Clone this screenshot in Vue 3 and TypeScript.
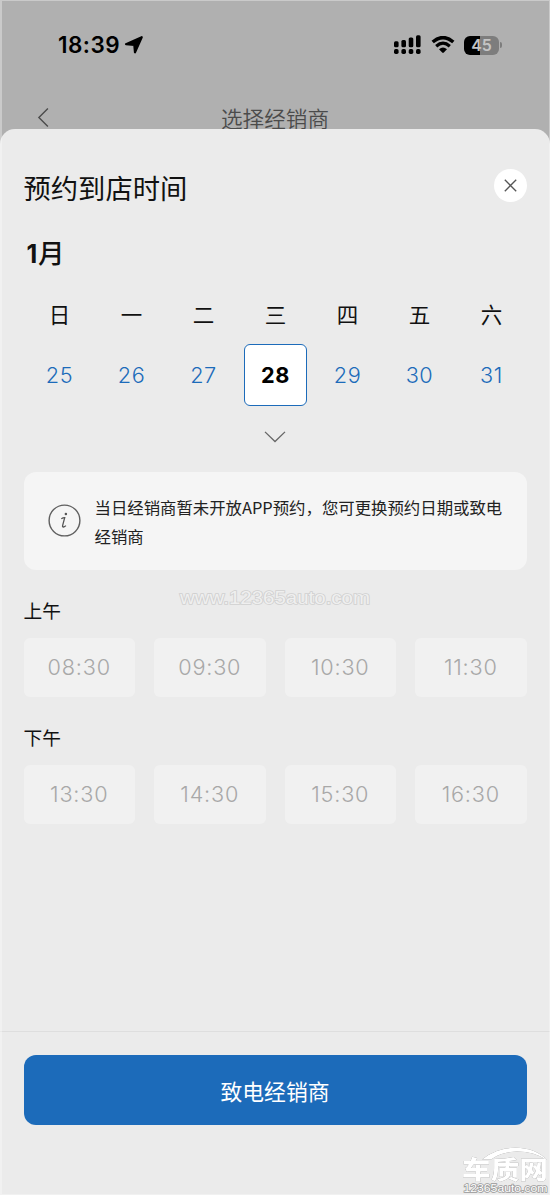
<script setup lang="ts">
interface Day {
  week: string
  date: number
  active?: boolean
}

const days: Day[] = [
  { week: '日', date: 25 },
  { week: '一', date: 26 },
  { week: '二', date: 27 },
  { week: '三', date: 28, active: true },
  { week: '四', date: 29 },
  { week: '五', date: 30 },
  { week: '六', date: 31 },
]

const periods: { label: string; slots: string[] }[] = [
  { label: '上午', slots: ['08:30', '09:30', '10:30', '11:30'] },
  { label: '下午', slots: ['13:30', '14:30', '15:30', '16:30'] },
]
</script>

<template>
  <div class="screen">
    <header class="status">
      <span class="clock">18:39</span>
      <svg class="arrow" width="20" height="20" viewBox="0 0 20 20">
        <path d="M2 9.2 17.7 2.2 11 17.3 10.3 9.9Z" stroke="#000" stroke-width="2.2" stroke-linejoin="round" />
      </svg>
      <svg class="signal" width="28" height="20" viewBox="0 0 28 20">
        <rect x="0" y="6.2" width="4.6" height="6" rx="1.5" />
        <rect x="7.4" y="5" width="4.6" height="7.2" rx="1.5" />
        <rect x="14.7" y="2.6" width="4.6" height="9.6" rx="1.5" />
        <rect x="22" y="0.3" width="4.6" height="11.9" rx="1.5" />
        <rect x="0" y="14.1" width="4.6" height="4.8" rx="1.7" />
        <rect x="7.4" y="14.1" width="4.6" height="4.8" rx="1.7" />
        <rect x="14.7" y="14.1" width="4.6" height="4.8" rx="1.7" />
        <rect x="22" y="14.1" width="4.6" height="4.8" rx="1.7" />
      </svg>
      <svg class="wifi" width="24" height="18" viewBox="0 0 24 18">
        <path d="M1.7 6Q12-2.8 22.3 6" fill="none" stroke="#000" stroke-width="3.5" />
        <path d="M5.2 10.2Q12 4.2 18.8 10.2" fill="none" stroke="#000" stroke-width="3.2" />
        <path d="M8 13.2Q12 9.8 16 13.2L12.8 16.6Q12 17.4 11.2 16.6Z" />
      </svg>
      <span class="battery"><span class="level">45</span></span>
      <i class="cap"></i>
    </header>

    <nav class="nav">
      <svg class="back" width="12" height="20" viewBox="0 0 12 20">
        <path d="M10.9 .5 1.9 9.5 10.9 18.5" fill="none" stroke="#4b4b4b" stroke-width="1.4" />
      </svg>
      <span class="nav-title">选择经销商</span>
    </nav>

    <main class="sheet">
      <div class="head">
        <h1>预约到店时间</h1>
        <button class="close">
          <svg width="13" height="13" viewBox="0 0 13 13">
            <path d="M.8.8 12.2 12.2M12.2.8.8 12.2" stroke="#555" stroke-width="1.3" />
          </svg>
        </button>
      </div>
      <h2><span class="num">1</span>月</h2>

      <div class="calendar">
        <div v-for="d in days" :key="d.date" class="day">
          <span class="week">{{ d.week }}</span>
          <span class="date" :class="{ active: d.active }">{{ d.date }}</span>
        </div>
      </div>
      <svg class="expand" width="22" height="12" viewBox="0 0 22 12">
        <path d="M1 .9 11 10.5 21 .9" fill="none" stroke="#666" stroke-width="1.3" />
      </svg>

      <section class="notice">
        <svg class="info" width="33" height="33" viewBox="0 0 33 33">
          <circle cx="16.5" cy="16.5" r="15.4" fill="none" stroke="#606060" stroke-width="1.4" />
          <circle cx="17.9" cy="10" r="1.25" fill="#555" />
          <path d="M13.3 14.8Q15 13.7 16.7 13.7L14.6 21.6Q14.3 23.1 15.5 23 16.8 22.7 17.9 21.6" fill="none" stroke="#555" stroke-width="1.3" />
        </svg>
        <p>当日经销商暂未开放APP预约，您可更换预约日期或致电经销商</p>
      </section>

      <section v-for="p in periods" :key="p.label" class="period">
        <h3>{{ p.label }}</h3>
        <div class="slots">
          <button v-for="s in p.slots" :key="s" class="slot">{{ s }}</button>
        </div>
      </section>

      <footer>
        <button class="call">致电经销商</button>
      </footer>
    </main>

    <svg class="watermark" width="196" height="26" viewBox="0 0 196 26">
      <text x="3" y="18" textLength="190" lengthAdjust="spacingAndGlyphs">www.12365auto.com</text>
    </svg>
    <svg class="brand" width="90" height="50" viewBox="0 0 90 50">
      <g class="shade">
        <path d="M21 13.5Q36 1.5 55 1.7 75 2 86 14 72 5.5 56 5.6 40 6 30 13.5Z" />
        <text class="brand-name" x="1" y="32.5" textLength="86" lengthAdjust="spacingAndGlyphs">车质网</text>
      </g>
      <text class="brand-url" x="2.5" y="46" textLength="84" lengthAdjust="spacingAndGlyphs">12365auto.com</text>
    </svg>
  </div>
</template>

<style>
body {
  margin: 0;
}
</style>

<style scoped>
.screen {
  position: relative;
  box-sizing: border-box;
  width: 550px;
  height: 1195px;
  overflow: hidden;
  background: #b0b0b0;
  color: #111;
  font-family: "Noto Sans CJK SC", sans-serif;
  display: flex;
  flex-direction: column;
}
.screen::after {
  content: "";
  position: absolute;
  inset: 0;
  border: solid rgba(255, 255, 255, 0.55);
  border-width: 1px 1px 1px 2px;
  opacity: 0.6;
  pointer-events: none;
}
h1, h2, h3, p {
  margin: 0;
  font-weight: 400;
}
button {
  border: 0;
  padding: 0;
  font-family: inherit;
}
svg {
  display: block;
  flex: none;
}
.status {
  height: 90px;
  display: flex;
  align-items: center;
  flex: none;
}
.clock {
  width: 66px;
  margin-left: 58px;
  font: 600 22.5px/30px Inter, sans-serif;
  letter-spacing: 0.45px;
  color: #000;
}
.signal {
  margin-left: 250px;
}
.wifi {
  margin-left: 9px;
}
.battery {
  width: 35px;
  height: 19px;
  margin-left: 9px;
  border-radius: 6px;
  background: linear-gradient(90deg, #000 0 16px, #7d7d7d 16px);
  text-align: center;
}
.level {
  display: block;
  font: 600 16px/19px Inter, sans-serif;
  color: #c4c4c4;
}
.cap {
  width: 2px;
  height: 6px;
  margin-left: 1px;
  border-radius: 0 3px 3px 0;
  background: #7d7d7d;
}
.nav {
  height: 39px;
  flex: none;
  display: grid;
  grid-template-columns: 60px 1fr 60px;
}
.back {
  margin: 18px 0 0 37px;
}
.nav-title {
  padding-top: 12px;
  text-align: center;
  font-size: 21.6px;
  line-height: 32px;
  font-weight: 350;
  color: #4b4b4b;
}
.sheet {
  position: relative;
  flex: 1;
  display: flex;
  flex-direction: column;
  padding: 0 23.5px;
  border-radius: 15px 15px 0 0;
  background: #ebebeb;
}
.head {
  height: 96px;
  padding-top: 20px;
  box-sizing: border-box;
  display: flex;
  justify-content: space-between;
}
h1 {
  padding-top: 18px;
  font-size: 27.3px;
  line-height: 40px;
  height: 40px;
}
.close {
  width: 33px;
  height: 33px;
  margin-top: 20px;
  border-radius: 50%;
  background: #fff;
  display: grid;
  place-items: center;
}
h2 {
  height: 40px;
  padding: 7px 0 1px 3px;
  font-size: 26.5px;
  line-height: 40px;
  font-weight: 500;
}
.num {
  font-family: Inter, sans-serif;
  font-weight: 700;
  font-size: 25px;
  letter-spacing: 0.8px;
}
.calendar {
  display: grid;
  grid-template-columns: repeat(7, 1fr);
  margin: 25px -1px 0 0;
}
.day {
  display: flex;
  flex-direction: column;
  align-items: center;
}
.week {
  height: 46px;
  font-size: 21.5px;
  line-height: 32px;
}
.date {
  box-sizing: border-box;
  width: 63px;
  height: 62px;
  border-radius: 6px;
  text-align: center;
  font: 300 21.7px/63px Inter, sans-serif;
  letter-spacing: 0.6px;
  color: #1c6bba;
}
.date.active {
  border: 1.5px solid #1c6bba;
  background: #fff;
  color: #000;
  font-weight: 700;
  line-height: 61px;
}
.expand {
  margin: 25px auto 0;
}
.notice {
  box-sizing: border-box;
  height: 98px;
  margin-top: 29px;
  padding: 22px 23px 0 24px;
  border-radius: 12px;
  background: #f5f5f5;
  display: flex;
}
.info {
  margin-top: 10px;
}
.notice p {
  width: 414px;
  margin: -1px 0 0 14px;
  font-size: 16.4px;
  line-height: 28.6px;
  color: #222;
}
.period {
  height: 127px;
}
.period:nth-of-type(2) {
  margin-top: 24px;
}
h3 {
  height: 44px;
  font-size: 18.7px;
  line-height: 32px;
}
.slots {
  display: grid;
  grid-template-columns: repeat(4, 1fr);
  column-gap: 19px;
}
.slot {
  height: 58.5px;
  border-radius: 6px;
  background: #f1f1f1;
  color: #a8a8a8;
  font: 300 21.7px/58px Inter, sans-serif;
  letter-spacing: 0.8px;
}
footer {
  margin: auto -23.5px 0;
  height: 164px;
  border-top: 1px solid #dedede;
  padding: 23px 23.5px 0;
  box-sizing: border-box;
}
.call {
  width: 100%;
  height: 70px;
  border-radius: 12px;
  background: #1c6bba;
  color: #fff;
  font-size: 21.8px;
  line-height: 69px;
}
.watermark {
  position: absolute;
  left: 177px;
  top: 586px;
}
.watermark text {
  font: 400 18px "Liberation Sans", sans-serif;
  fill: #efefef;
  stroke: #d0d0d0;
  stroke-width: 1.6px;
  paint-order: stroke;
}
.brand {
  position: absolute;
  left: 461px;
  top: 1146px;
}
.shade {
  fill: #fff;
  filter: drop-shadow(0.7px 0.8px 0.6px #777);
}
.brand-name {
  font: 900 25px "Noto Sans CJK SC", sans-serif;
}
.brand-url {
  font: 400 11px "Liberation Sans", sans-serif;
  fill: #fff;
  stroke: #999;
  stroke-width: 1.5px;
  paint-order: stroke;
}
</style>
